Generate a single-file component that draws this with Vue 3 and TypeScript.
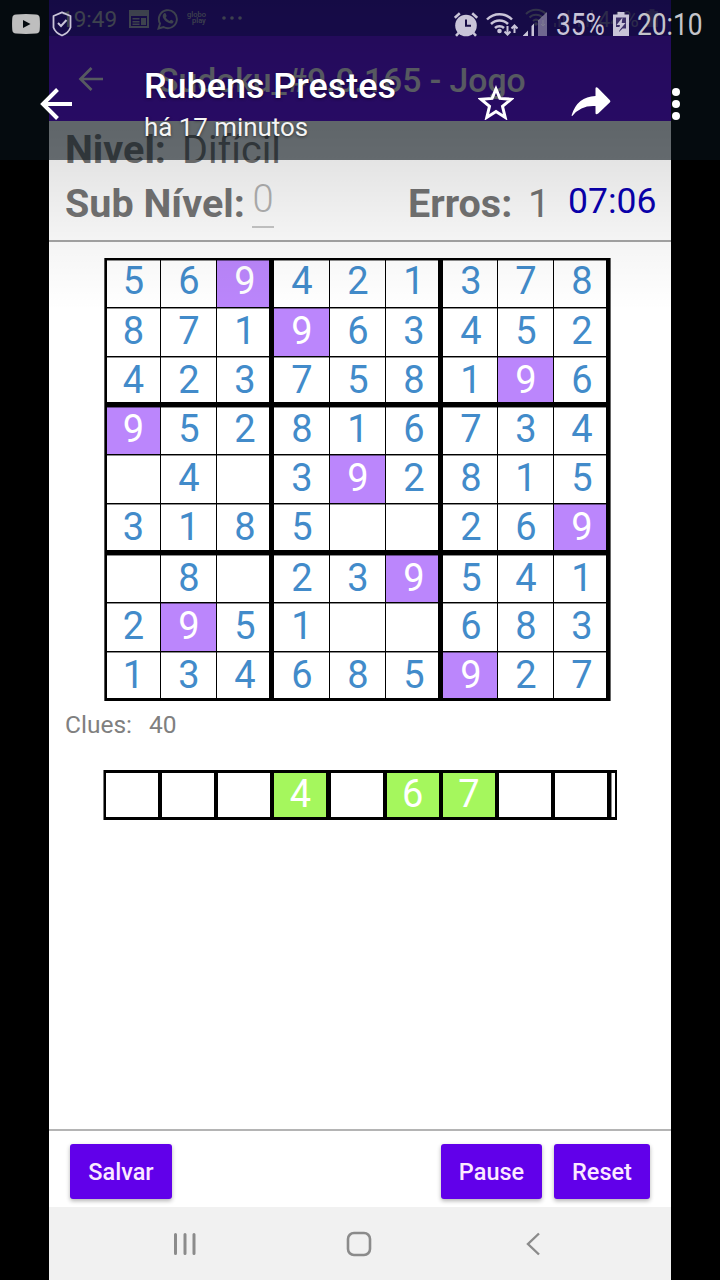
<script setup lang="ts">
interface Cell {
  value: string
  marked: boolean
}

const rows: string[] = [
  '569421378',
  '871963452',
  '423758196',
  '952816734',
  ' 4 392815',
  '3185  269',
  ' 8 239541',
  '2951  683',
  '134685927',
]

const selected = '9'

const cells: Cell[] = rows.flatMap((row) =>
  row.split('').map((ch) => ({ value: ch.trim(), marked: ch === selected })),
)

const pool: string[] = ['', '', '', '4', '', '6', '7', '', '']
</script>

<template>
  <div class="screen">
    <main class="app">
      <div class="app-status">
        <span class="app-time">19:49</span>
        <svg class="i-news" viewBox="0 0 20 18" width="20" height="18">
          <path fill="currentColor" fill-rule="evenodd" d="M0 0h20v18H0zM2 6v10h16V6zM3.500 8h7v1.500h-7zM3.500 11h7v1.500h-7zM3.500 13.500h7V15h-7zM12 8h5v7h-5z" />
        </svg>
        <svg class="i-wa" viewBox="0 0 22 22" width="22" height="22">
          <path fill="none" stroke="currentColor" stroke-width="1.900" d="M1.500 20.500 3 15.500A9 9 0 1 1 6.500 19z" />
          <path fill="currentColor" d="M7 5.500c1-.8 1.600-.3 2 .8l.6 1.500c.2.6-.8 1.300-.8 1.700 1 1.800 2 2.700 3.800 3.500.6 0 1-1.300 1.600-1.200l2.200 1.100c.4.4-.2 2-1.200 2.500C12 16.500 6 12 5.700 8.300 5.700 7 6.200 6.200 7 5.500z" />
        </svg>
        <span class="globo"><span>globo</span><span class="play">play</span></span>
        <svg class="i-more" viewBox="0 0 20 4" width="20" height="4">
          <g fill="currentColor"><circle cx="2" cy="2" r="1.800" /><circle cx="10" cy="2" r="1.800" /><circle cx="18" cy="2" r="1.800" /></g>
        </svg>
        <svg class="i-wifi-small" viewBox="0 0 24 20" width="24" height="20">
          <g fill="none" stroke="currentColor" stroke-width="2"><path d="M1 6a14 14 0 0 1 20 0" /><path d="M4.500 9.500a9 9 0 0 1 13 0" /><path d="M8 13a4.500 4.500 0 0 1 6 0" /></g>
          <circle cx="11" cy="16" r="1.800" fill="currentColor" />
          <path d="M18 12v6m-2-2 2 2 2-2" fill="none" stroke="currentColor" />
        </svg>
        <svg class="i-bars" viewBox="0 0 40 18" width="40" height="18">
          <path fill="currentColor" d="M0 14h2v4H0zM4.500 10h2v8h-2zM9 6h2v12H9zM13.500 1h2v17h-2zM24 14h2v4h-2zM28 10h2v8h-2zM32.500 5h2v13h-2zM37 1h2v17h-2z" />
        </svg>
        <span class="app-batt">44%</span>
        <svg class="i-batt-small" viewBox="0 0 12 18" width="12" height="18"><path fill="currentColor" d="M3.500 0h5v2H12v16H0V2h3.500z" /></svg>
      </div>

      <header class="toolbar">
        <svg class="tool-back" viewBox="0 0 26 26" width="26" height="26">
          <path fill="none" stroke="currentColor" stroke-width="2.700" d="M13.500 2 2.500 13l11 11M2.500 13H25" />
        </svg>
        <h1>Sudoku_#9.0.165 - Jogo</h1>
      </header>

      <section class="info">
        <div class="line-level"><b>Nivel:</b><span>Difícil</span></div>
        <div class="line-sub">
          <b class="sub-label">Sub Nível:</b>
          <span class="sub-value">0</span>
          <b class="err-label">Erros:</b>
          <span class="err-value">1</span>
          <span class="timer">07:06</span>
        </div>
      </section>

      <section class="game">
        <div class="board">
          <div v-for="(cell, i) in cells" :key="i" class="cell" :class="{ marked: cell.marked }">
            <span>{{ cell.value }}</span>
          </div>
        </div>
        <div class="clues"><span>Clues:</span><span>40</span></div>
        <div class="pool">
          <div v-for="(n, i) in pool" :key="i" class="slot" :class="{ done: n !== '' }">
            <span>{{ n }}</span>
          </div>
          <div class="slot-end"></div>
        </div>
      </section>

      <footer class="actions">
        <button class="save">Salvar</button>
        <button class="pause">Pause</button>
        <button class="reset">Reset</button>
      </footer>

      <nav class="nav">
        <svg viewBox="0 0 24 24" width="24" height="24"><path fill="none" stroke="currentColor" stroke-width="3" stroke-linecap="round" d="M2.500 2.500v19M12 2.500v19M21 2.500v19" /></svg>
        <svg class="nav-home" viewBox="0 0 26 26" width="26" height="26"><rect x="2" y="2" width="22" height="22" rx="6" fill="none" stroke="currentColor" stroke-width="2.600" /></svg>
        <svg class="nav-back" viewBox="0 0 14 24" width="14" height="24"><path fill="none" stroke="currentColor" stroke-width="2.400" d="M13 1.500 2 12l11 10.500" /></svg>
      </nav>
    </main>

    <div class="shade"></div>

    <div class="viewer">
      <div class="sys">
        <svg class="s-yt" viewBox="0 0 28 20" width="28" height="20">
          <path fill="currentColor" fill-rule="evenodd" d="M4 .4Q14-.4 24 .4q3.500.2 3.700 3.600.5 6 0 12-.2 3.400-3.700 3.600-10 .8-20 0Q.5 19.400.300 16-.2 10 .3 4 .5.600 4 .400zM11 6v8l7.500-4z" />
        </svg>
        <svg class="s-shield" viewBox="0 0 20 26" width="20" height="26">
          <path fill="none" stroke="currentColor" stroke-width="1.800" stroke-linejoin="round" d="M10 1.300 18.500 5v11.500q-2 5.500-8.500 8-6.500-2.500-8.500-8V5z" />
          <path fill="none" stroke="currentColor" stroke-width="2" d="m6 12 3 3 5.500-6" />
        </svg>
        <svg class="s-alarm" viewBox="0 0 24 25" width="24" height="25">
          <circle cx="12" cy="13.500" r="10.800" fill="currentColor" />
          <path stroke="currentColor" stroke-width="2.600" d="m.8 5.800 5-4.500M23.200 5.800l-5-4.500M5 20.500l-3 3.300M19 20.500l3 3.300" />
          <path fill="none" stroke="#180c46" stroke-width="2" d="M12 7.500v6.300h5" />
        </svg>
        <svg class="s-wifi" viewBox="0 0 32 25" width="32" height="25">
          <g fill="none" stroke="currentColor" stroke-width="2.500"><path d="M1 7.500a17.500 17.500 0 0 1 25 0" /><path d="M5 12a12 12 0 0 1 17 0" /><path d="M9 16a6.500 6.500 0 0 1 9 0" /></g>
          <circle cx="13.500" cy="19" r="2.300" fill="currentColor" />
          <path fill="none" stroke="currentColor" stroke-width="2" d="M21.500 14v8.500m-3-3 3 3 3-3M28.500 21v-7.500m-3 3 3-3 3 3" />
        </svg>
        <svg class="s-signal" viewBox="0 0 24 24" width="24" height="24">
          <path fill="currentColor" d="M0 24v-.5l5-5V24zM8.500 24V14l2.500-2.500V24z" />
          <path fill="currentColor" opacity=".5" d="M15 24V8.500L24 0v24z" />
        </svg>
        <span class="s-text s-pct"><i>35%</i></span>
        <svg class="s-batt" viewBox="0 0 16 24" width="16" height="24">
          <path fill="currentColor" d="M4.500 0h7v2.500H16V24H0V2.500h4.500z" />
          <path fill="#3c2f69" d="M3 5.500h10v11H9.500L6 20l1-5H3z" />
          <path fill="currentColor" d="m9.500 5.500-6 7.500H7l-2 7 7.500-9H8.700z" />
        </svg>
        <span class="s-text s-clock"><i>20:10</i></span>
      </div>

      <div class="bar">
        <svg class="b-back" viewBox="0 0 32 32" width="32" height="32">
          <path fill="none" stroke="currentColor" stroke-width="4" d="M17.500 1.500 3 16l14.500 14.500M3 16h29" />
        </svg>
        <div class="who">
          <div class="name">Rubens Prestes</div>
          <div class="when">há 17 minutos</div>
        </div>
        <svg class="b-star" viewBox="0 0 36 35" width="36" height="35">
          <path fill="none" stroke="currentColor" stroke-width="3" d="m18 4 3.900 9.400 11.200.8-8.600 7.200 2.700 11-9.200-5.900-9.200 5.900 2.700-11-8.600-7.200 11.200-.8z" />
        </svg>
        <svg class="b-share" viewBox="0 0 40 30" width="40" height="30">
          <path fill="currentColor" d="M24.500 1.500q.2-2 2.200-.7l12 12.200q1.300 1.300 0 2.600l-11.500 11q-2.700 1.700-2.700-.6V19Q10 18 1.500 28.700.5 29.700.700 28 6.500 9.500 24.500 9z" />
        </svg>
        <svg class="b-dots" viewBox="0 0 8 32" width="8" height="32">
          <g fill="currentColor"><circle cx="4" cy="4" r="4" /><circle cx="4" cy="16" r="4" /><circle cx="4" cy="28" r="4" /></g>
        </svg>
      </div>
    </div>
  </div>
</template>

<style>
body {
  background: #000;
}
</style>

<style scoped>
.screen {
  position: relative;
  width: 720px;
  height: 1280px;
  overflow: hidden;
  background: #000;
  font-family: Roboto, "Liberation Sans", sans-serif;
}
svg {
  display: block;
  flex: none;
}
span,
b,
h1 {
  white-space: nowrap;
}
.app {
  display: flex;
  flex-direction: column;
  width: 622px;
  height: 1280px;
  margin: 0 auto;
  background: #fff;
}
.app-status {
  display: flex;
  height: 36px;
  background: #3700b3;
  color: #b4afc8;
}
.app-time {
  width: 68px;
  margin-left: 12px;
  font-size: 22.500px;
  line-height: 39px;
}
.i-news {
  margin-top: 10px;
}
.i-wa {
  margin: 8px 0 0 8px;
}
.globo {
  display: flex;
  flex-direction: column;
  width: 22px;
  margin: 12px 0 0 8px;
  font-size: 7.500px;
  font-weight: 500;
  line-height: 6px;
}
.play {
  padding-left: 5px;
}
.i-more {
  margin: 16px 0 0 13px;
}
.i-wifi-small {
  margin: 8px 0 0 283px;
  opacity: .75;
}
.i-bars {
  margin: 9px 0 0 5px;
  opacity: .4;
}
.app-batt {
  width: 44px;
  margin-left: 4px;
  font-size: 22px;
  line-height: 39px;
  opacity: .6;
}
.i-batt-small {
  margin: 9px 0 0 4px;
  opacity: .4;
}
.toolbar {
  display: flex;
  height: 85px;
  background: #6200ee;
  color: #f2eaf2;
}
.tool-back {
  margin: 30px 0 0 29px;
}
h1 {
  margin: 24px 0 0 54px;
  font-size: 33.700px;
  font-weight: 500;
  line-height: 41px;
}
.info {
  height: 121px;
  padding: 3px 0 0 16px;
  border-bottom: 2px solid #a6a6a6;
  box-sizing: border-box;
  color: #757575;
  font-size: 39.500px;
}
.line-level {
  display: flex;
  gap: 16px;
  height: 53px;
  line-height: 52px;
}
.line-sub {
  display: flex;
  height: 53px;
  line-height: 53px;
}
.sub-label {
  width: 187px;
}
.sub-value {
  width: 22px;
  height: 49px;
  border-bottom: 2px solid #c8c8c8;
  color: #b4b4b4;
  font-size: 38px;
  font-weight: 300;
  line-height: 45px;
  text-align: center;
}
.err-label {
  width: 120px;
  margin-left: 134px;
}
.err-value {
  width: 40px;
}
.timer {
  color: #0a00b4;
  font-size: 35.500px;
  line-height: 48px;
}
.game {
  flex: 1;
  padding: 16px 0 0 55px;
}
.board {
  display: grid;
  grid-template-columns: 53px 55px 56px 55px 55px 56px 54px 55px 52px;
  grid-template-rows: 47px 48px 49px 47px 48px 50px 47px 48px 46px;
  gap: 1px;
  width: 507px;
  height: 443px;
  box-sizing: border-box;
  padding: 2px 5px 3px 3px;
  background: #000;
  box-shadow: inset 1px 0 #555, inset -1px 0 #666;
}
.cell {
  background: #fff;
  box-shadow: inset 0 1px rgba(0, 0, 0, .45);
  color: #428bca;
  font-size: 38px;
  line-height: 46px;
}
.cell span {
  display: block;
  width: 56px;
  text-align: center;
}
.cell:nth-child(9n + 1) span {
  width: 53px;
}
.cell:nth-child(-n + 9) {
  line-height: 42px;
}
.cell:nth-child(9n + 3),
.cell:nth-child(9n + 6) {
  margin-right: 4px;
}
.cell:nth-child(n + 19):nth-child(-n + 27),
.cell:nth-child(n + 46):nth-child(-n + 54) {
  margin-bottom: 4px;
}
.cell:nth-child(n + 28):nth-child(-n + 36) {
  line-height: 45px;
}
.marked {
  background: #bb86fc;
  color: #fff;
}
.clues {
  display: flex;
  gap: 17px;
  margin: 7px 0 0 -39px;
  color: #808080;
  font-size: 24.500px;
  line-height: 34px;
}
.pool {
  display: grid;
  grid-template-columns: repeat(9, 52px) 4px;
  column-gap: 4.150px;
  width: 514px;
  height: 50px;
  box-sizing: border-box;
  margin: 28px 0 0 -1px;
  padding: 3px;
  background: #000;
  box-shadow: inset 1px 0 #777;
}
.slot {
  background: #fff;
  color: #fff;
  font-size: 38px;
  line-height: 42px;
  text-align: center;
}
.done {
  background: #a5f75d;
}
.slot-end {
  background: #fff;
  border-left: 1px solid #888;
}
.actions {
  display: flex;
  height: 78px;
  box-sizing: border-box;
  padding: 13px 21px 0;
  border-top: 2px solid #b4b4b4;
}
button {
  height: 55px;
  padding: 0;
  border: 0;
  border-radius: 3px;
  background: #6100ea;
  box-shadow: 0 2px 4px rgba(0, 0, 0, .3);
  color: #fbe9ff;
  font: 500 23.500px/56px Roboto, sans-serif;
}
.save {
  width: 102px;
  margin-right: auto;
}
.pause {
  width: 101px;
  margin-right: 12px;
}
.reset {
  width: 96px;
}
.nav {
  display: flex;
  height: 73px;
  padding: 25px 0 0 124px;
  box-sizing: border-box;
  background: #f1f1f1;
  color: #8b8b8b;
}
.nav-home {
  margin: -1px 0 0 149px;
}
.nav-back {
  margin-left: 154px;
}
.shade {
  position: absolute;
  inset: 0 0 auto;
  height: 320px;
  background: linear-gradient(rgba(0, 0, 0, .27), rgba(0, 0, 0, .105) 160px, rgba(0, 0, 0, .045) 240px, rgba(0, 0, 0, 0) 310px);
}
.viewer {
  position: absolute;
  inset: 0 0 auto;
  height: 160px;
  background: rgba(9, 19, 26, .585);
  color: #fff;
}
.sys {
  display: flex;
  height: 49px;
  color: #c9c4d8;
}
.s-yt {
  margin: 14px 0 0 12px;
  color: #bebebe;
}
.s-shield {
  margin: 11px 0 0 12px;
}
.s-alarm {
  margin: 12px 0 0 382px;
}
.s-wifi {
  margin: 12px 0 0 8px;
}
.s-signal {
  margin: 12px 0 0 5px;
}
.s-text {
  font-size: 31px;
  line-height: 50px;
}
.s-text i {
  display: inline-block;
  font-style: normal;
  transform: scaleX(.85);
  transform-origin: 0 0;
}
.s-pct {
  width: 57px;
  margin-left: 9px;
}
.s-batt {
  margin: 12px 0 0;
}
.s-clock {
  width: 68px;
  margin-left: 8px;
  color: #c4c4ca;
}
.bar {
  display: flex;
}
.b-back {
  margin: 39px 0 0 40px;
}
.who {
  width: 334px;
  margin: 16px 0 0 72px;
  text-shadow: 0 1px 3px rgba(0, 0, 0, .5);
}
.name {
  font-size: 35.900px;
  font-weight: 500;
  line-height: 43px;
}
.when {
  font-size: 25.900px;
  line-height: 39px;
  color: #f4f4f4;
}
.b-star {
  margin: 36px 0 0 0;
}
.b-share {
  margin: 38px 0 0 57px;
}
.b-dots {
  margin: 39px 0 0 61px;
}
</style>
